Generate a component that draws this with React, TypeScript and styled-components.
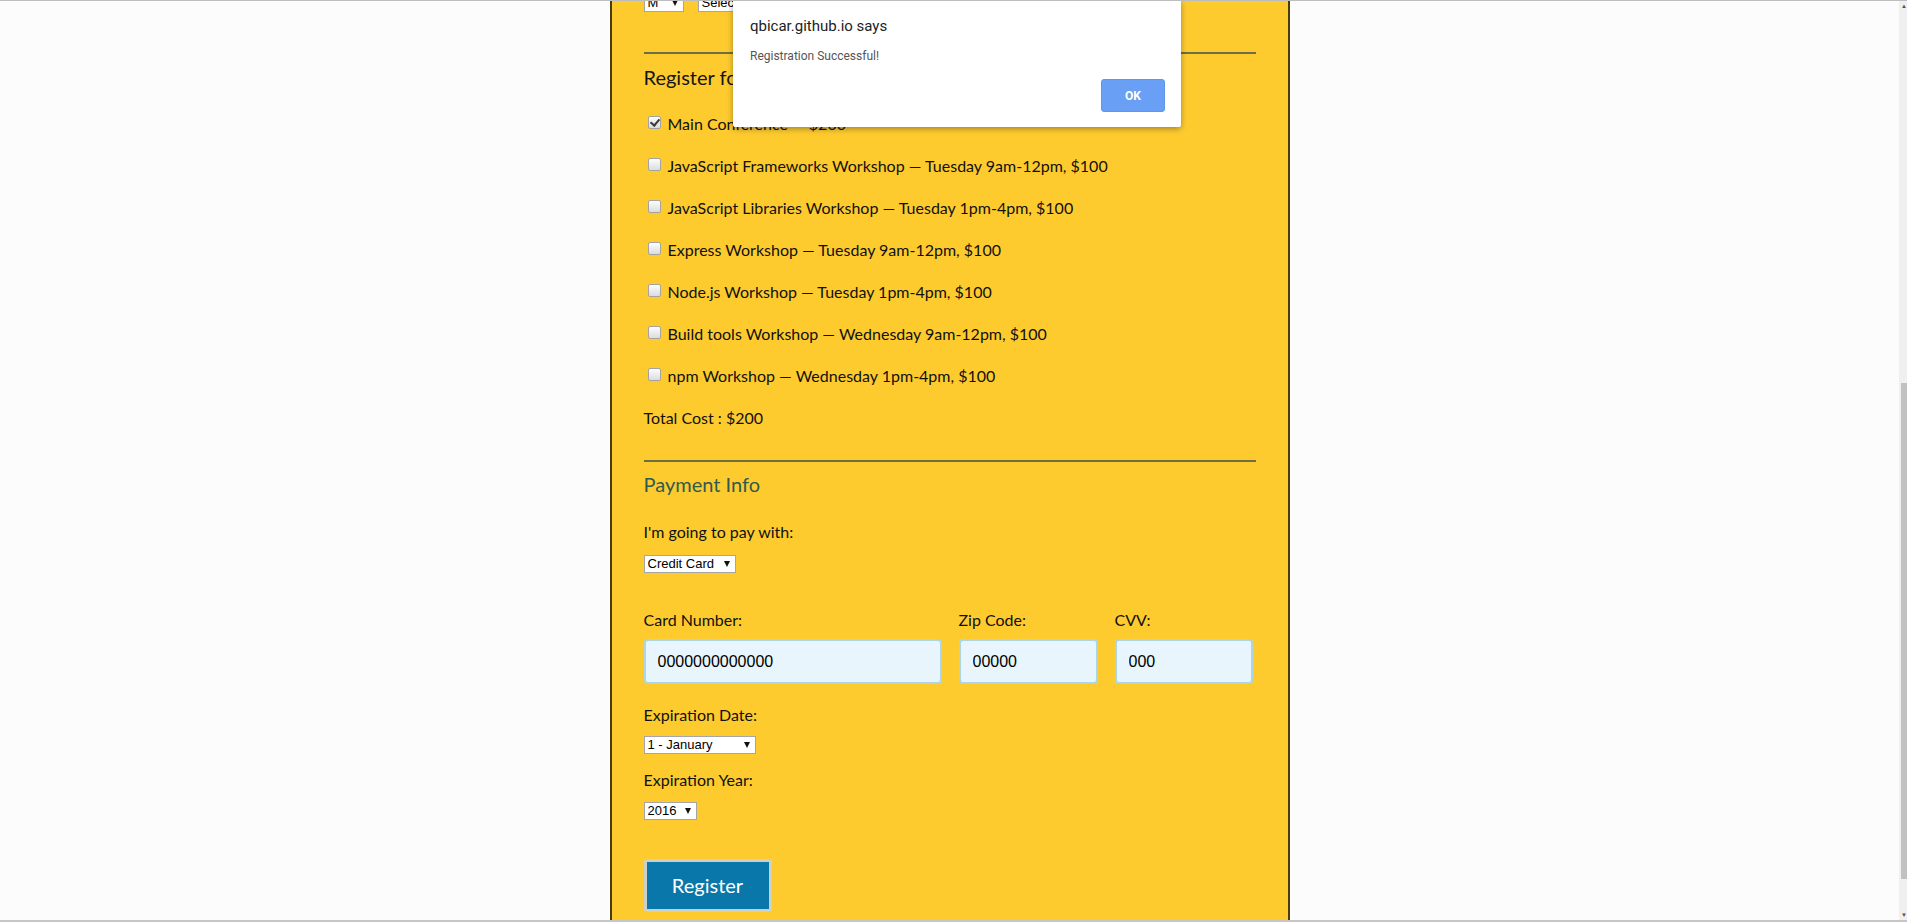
import React from 'react';
import styled, { createGlobalStyle } from 'styled-components';

const GlobalStyle = createGlobalStyle`
  html, body {
    margin: 0;
    padding: 0;
    background: #fcfcfc;
    overflow: hidden;
  }
  * {
    box-sizing: border-box;
  }
`;

const BODY_FONT = `Lato, 'Noto Sans', sans-serif`;
const UI_FONT = `'Liberation Sans', Arial, sans-serif`;

const Frame = styled.div`
  display: flex;
  height: 922px;
  border-top: 1px solid #bdbdbd;
  border-bottom: 2px solid #c6c6c6;
  overflow: hidden;
`;

const Viewport = styled.div`
  position: relative;
  flex: 1;
  overflow: hidden;
`;

const Panel = styled.div`
  width: 680px;
  height: 100%;
  margin: 0 auto;
  padding: 0 32px;
  background: #fecb2f;
  border-left: 2px solid #4a3c06;
  border-right: 2px solid #4a3c06;
  font-family: ${BODY_FONT};
  font-size: 16px;
  color: #111;
`;

const ClippedRow = styled.div`
  display: flex;
  align-items: flex-end;
  gap: 14px;
  height: 11px;
  overflow: hidden;
`;

const Rule = styled.hr<{ $top: number }>`
  margin: ${({ $top }) => $top}px 0 0;
  border: 0;
  height: 2px;
  background: #6b6f45;
`;

const Heading = styled.h3<{ $accent?: boolean; $top: number }>`
  margin: ${({ $top }) => $top}px 0 0;
  font-size: 20px;
  line-height: 25px;
  font-weight: 400;
  color: ${({ $accent }) => ($accent ? '#2f5a50' : '#151515')};
`;

const ActivityList = styled.div`
  display: flex;
  flex-direction: column;
  margin-top: 12px;
`;

const ActivityRow = styled.label`
  display: flex;
  align-items: center;
  gap: 7px;
  height: 42px;
  padding-left: 4px;
`;

const TotalRow = styled.div`
  display: flex;
  align-items: center;
  height: 42px;
`;

const Check = styled.input.attrs({ type: 'checkbox' })`
  appearance: none;
  position: relative;
  width: 13px;
  height: 13px;
  margin: 0 0 2px;
  border: 1px solid #a3a3a3;
  border-radius: 2px;
  background: linear-gradient(#fdfdfd, #dcdcdc);
  &:checked::after {
    content: '';
    position: absolute;
    left: 3px;
    top: 0px;
    width: 4px;
    height: 7px;
    border-right: 2px solid #3a3a3a;
    border-bottom: 2px solid #3a3a3a;
    transform: rotate(40deg);
  }
`;

const FieldLabel = styled.div<{ $top: number }>`
  margin-top: ${({ $top }) => $top}px;
  line-height: 24px;
`;

const SelectWrap = styled.div<{ $width: number; $top?: number }>`
  position: relative;
  width: ${({ $width }) => $width}px;
  height: 18px;
  margin-top: ${({ $top = 0 }) => $top}px;
  flex-shrink: 0;
  &::after {
    content: '';
    position: absolute;
    right: 6px;
    top: 6px;
    width: 0;
    height: 0;
    border-left: 3.5px solid transparent;
    border-right: 3.5px solid transparent;
    border-top: 6px solid #111;
    pointer-events: none;
  }
`;

const NativeSelect = styled.select`
  appearance: none;
  display: block;
  width: 100%;
  height: 18px;
  padding: 0 0 0 3px;
  margin: 0;
  border: 1px solid #a6a6a6;
  border-radius: 0;
  background: #fff;
  font-family: ${UI_FONT};
  font-size: 13px;
  line-height: 16px;
  color: #000;
`;

const CardGrid = styled.div`
  display: grid;
  grid-template-columns: 298px 139px 138px;
  column-gap: 17px;
  row-gap: 7px;
  margin-top: 35px;
`;

const GridLabel = styled.div`
  line-height: 24px;
`;

const TextInput = styled.input`
  width: 100%;
  height: 45px;
  padding: 0 12px;
  border: 2px solid #acd5e6;
  border-radius: 4px;
  background: #e8f5fc;
  font-family: ${UI_FONT};
  font-size: 16px;
  color: #000;
  outline: none;
`;

const RegisterButton = styled.button`
  display: block;
  width: 128px;
  height: 53px;
  margin-top: 39px;
  border: 3px solid #cbd0c8;
  border-radius: 3px;
  background: #0a77aa;
  color: #fff;
  font-family: ${BODY_FONT};
  font-size: 20px;
  padding: 0 0 2px;
`;

const Dialog = styled.div`
  position: absolute;
  top: -1px;
  left: 733px;
  width: 448px;
  height: 127px;
  padding: 15px 16px 0 17px;
  background: #fff;
  box-shadow: 0 2px 6px rgba(0, 0, 0, 0.35);
  border-radius: 0 0 2px 2px;
  font-family: Roboto, 'Noto Sans', sans-serif;
`;

const DialogTitle = styled.div`
  font-size: 15px;
  line-height: 22px;
  color: #222;
`;

const DialogMessage = styled.div`
  margin-top: 10px;
  font-size: 12px;
  line-height: 18px;
  color: #555;
`;

const DialogActions = styled.div`
  display: flex;
  justify-content: flex-end;
  margin-top: 14px;
`;

const OkButton = styled.button`
  width: 64px;
  height: 33px;
  border: 1px solid #5f95ee;
  border-radius: 3px;
  background: #699ff5;
  color: #fff;
  font-family: Roboto, 'Noto Sans', sans-serif;
  font-size: 12px;
  font-weight: 700;
`;

const Scrollbar = styled.div`
  display: flex;
  flex-direction: column;
  align-items: flex-end;
  width: 8px;
  background: #f0f0f0;
`;

const ScrollArrow = styled.div`
  height: 10px;
  width: 6px;
  font-size: 6px;
  line-height: 10px;
  color: #505050;
  text-align: center;
`;

const ScrollTrack = styled.div`
  flex: 1;
  display: flex;
  flex-direction: column;
  width: 6px;
`;

const ScrollThumb = styled.div`
  margin-top: 372px;
  height: 496px;
  width: 6px;
  background: #c1c1c1;
`;

const activities = [
  { label: 'Main Conference — $200', checked: true },
  { label: 'JavaScript Frameworks Workshop — Tuesday 9am-12pm, $100' },
  { label: 'JavaScript Libraries Workshop — Tuesday 1pm-4pm, $100' },
  { label: 'Express Workshop — Tuesday 9am-12pm, $100' },
  { label: 'Node.js Workshop — Tuesday 1pm-4pm, $100' },
  { label: 'Build tools Workshop — Wednesday 9am-12pm, $100' },
  { label: 'npm Workshop — Wednesday 1pm-4pm, $100' },
];

const Select: React.FC<{ width: number; top?: number; options: string[] }> = ({ width, top, options }) => (
  <SelectWrap $width={width} $top={top}>
    <NativeSelect defaultValue={options[0]}>
      {options.map((o) => (
        <option key={o}>{o}</option>
      ))}
    </NativeSelect>
  </SelectWrap>
);

export default function App() {
  return (
    <>
      <GlobalStyle />
      <Frame>
        <Viewport>
          <Panel>
            <ClippedRow>
              <Select width={40} options={['M', 'L', 'XL']} />
              <Select width={200} options={['Select Theme', 'JS Puns', 'I ♥ JS']} />
            </ClippedRow>

            <Rule $top={40} />
            <Heading $top={11}>Register for Activities</Heading>
            <ActivityList>
              {activities.map((a) => (
                <ActivityRow key={a.label}>
                  <Check defaultChecked={a.checked} />
                  {a.label}
                </ActivityRow>
              ))}
              <TotalRow>Total Cost : $200</TotalRow>
            </ActivityList>

            <Rule $top={22} />
            <Heading $top={10} $accent>
              Payment Info
            </Heading>
            <FieldLabel $top={23}>I'm going to pay with:</FieldLabel>
            <Select width={92} top={11} options={['Credit Card', 'PayPal', 'Bitcoin']} />

            <CardGrid>
              <GridLabel>Card Number:</GridLabel>
              <GridLabel>Zip Code:</GridLabel>
              <GridLabel>CVV:</GridLabel>
              <TextInput defaultValue="0000000000000" />
              <TextInput defaultValue="00000" />
              <TextInput defaultValue="000" />
            </CardGrid>

            <FieldLabel $top={19}>Expiration Date:</FieldLabel>
            <Select width={112} top={9} options={['1 - January', '2 - February', '3 - March']} />
            <FieldLabel $top={14}>Expiration Year:</FieldLabel>
            <Select width={53} top={10} options={['2016', '2017', '2018']} />

            <RegisterButton>Register</RegisterButton>
          </Panel>

          <Dialog role="alertdialog">
            <DialogTitle>qbicar.github.io says</DialogTitle>
            <DialogMessage>Registration Successful!</DialogMessage>
            <DialogActions>
              <OkButton>OK</OkButton>
            </DialogActions>
          </Dialog>
        </Viewport>
        <Scrollbar>
          <ScrollArrow>▲</ScrollArrow>
          <ScrollTrack>
            <ScrollThumb />
          </ScrollTrack>
          <ScrollArrow>▼</ScrollArrow>
        </Scrollbar>
      </Frame>
    </>
  );
}
